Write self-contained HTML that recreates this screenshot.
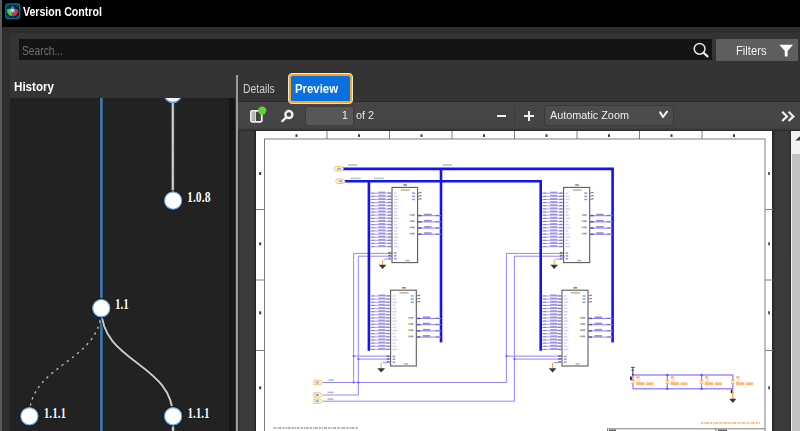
<!DOCTYPE html>
<html><head><meta charset="utf-8"><title>Version Control</title>
<style>
html,body{margin:0;padding:0;}
body{width:800px;height:431px;overflow:hidden;background:#2e2e2e;position:relative;font-family:"Liberation Sans",sans-serif;}
.abs{position:absolute;}
.t{position:absolute;white-space:nowrap;line-height:1;transform-origin:0 0;}
</style></head><body>
<!-- title bar -->
<div class="abs" style="left:0;top:0;width:800px;height:27px;background:#000;"></div>
<div class="abs" style="left:0;top:0;width:1.8px;height:431px;background:#5a5a5a;z-index:5;"></div>
<!-- app icon -->
<svg class="abs" style="left:0px;top:0px" width="26" height="24" viewBox="0 0 26 24">
<rect x="5.8" y="4" width="13.9" height="14.4" rx="2.6" fill="#03222f" stroke="#0b6b93" stroke-width="1.5"/>
<path d="M7.4,6.6 L9,5 M16.5,5 L18.2,6.6 M7.4,15.8 L9,17.4 M16.5,17.4 L18.2,15.8" stroke="#0a5676" stroke-width="1.1" fill="none"/>
<path d="M10,8.3 L12.6,5.6 L15.2,8.3 L12.6,9.6 Z" fill="#1580b8"/>
<path d="M7.2,8.9 L10.4,8.6 L12.4,12 L12.4,16.6 L9.2,15.2 L7.2,12.6 Z" fill="#3fd43a"/>
<path d="M12.7,16.6 L12.7,12 L14.8,8.8 L17.9,9.2 L17.9,12.6 L15.8,15.4 Z" fill="#e8283c"/>
<circle cx="12.5" cy="10.9" r="2.3" fill="#b9bcc8"/>
<circle cx="12.3" cy="10.4" r="1.1" fill="#e6e6ee"/>
<path d="M11,12.4 L14,12.4" stroke="#5a6a9a" stroke-width="0.9"/>
</svg>
<span class="t" id="t_title" style="left:22.7px;top:5.5px;font-size:12.5px;font-weight:bold;color:#fff;transform:scaleX(0.847);">Version Control</span>
<!-- inner panel -->
<div class="abs" style="left:9.5px;top:33px;width:790.5px;height:398px;background:#343434;"></div>
<!-- search -->
<div class="abs" style="left:19px;top:39.3px;width:692.8px;height:21.2px;background:#141414;"></div>
<span class="t" id="t_search" style="left:22px;top:45.2px;font-size:12.5px;color:#707070;transform:scaleX(0.82);">Search...</span>
<svg class="abs" style="left:690px;top:40px" width="22" height="20" viewBox="0 0 22 20">
<circle cx="9.6" cy="8.8" r="5.4" fill="none" stroke="#e8e8e8" stroke-width="1.5"/>
<path d="M13.6,12.9 L17.6,16.4" stroke="#e8e8e8" stroke-width="2.2" stroke-linecap="round"/>
</svg>
<div class="abs" style="left:716px;top:39px;width:82px;height:22px;background:#5e5e5e;"></div>
<span class="t" id="t_filters" style="left:735.5px;top:44.8px;font-size:12px;color:#f2f2f2;transform:scaleX(0.933);">Filters</span>
<svg class="abs" style="left:778px;top:42.5px" width="17" height="16" viewBox="0 0 17 16">
<path d="M1.4,1.8 L15,1.8 L9.6,8 L9.6,13.6 L6.8,13.6 L6.8,8 Z" fill="#fff"/>
</svg>
<!-- history -->
<span class="t" id="t_history" style="left:14px;top:81px;font-size:12.5px;font-weight:bold;color:#fff;transform:scaleX(0.929);">History</span>
<div class="abs" style="left:10px;top:98px;width:219px;height:333px;background:#222;"></div>
<div class="abs" style="left:229px;top:98px;width:6px;height:333px;background:#161616;"></div>
<div class="abs" style="left:236px;top:75px;width:2px;height:356px;background:#9a9a9a;"></div>
<svg class="abs" style="left:10px;top:98px" width="219" height="333" viewBox="10 98 219 333">
<line x1="101.4" y1="98" x2="101.4" y2="431" stroke="#3c7ab5" stroke-width="2.6"/>
<line x1="172.8" y1="98" x2="172.8" y2="201" stroke="#8e8e8e" stroke-width="2.8"/>
<line x1="172.8" y1="98" x2="172.8" y2="201" stroke="#e2e2e2" stroke-width="1.4"/>
<line x1="172.8" y1="98" x2="172.8" y2="201" stroke="#9a9a9a" stroke-width="1.4" stroke-dasharray="0.8 1.4" opacity="0.6"/>
<path d="M101.3,309 C101.3,363 173,363 173,417" fill="none" stroke="#1a1a1a" stroke-width="3.6"/>
<path d="M101.3,309 C101.3,363 173,363 173,417" fill="none" stroke="#c9c9c9" stroke-width="2"/>
<path d="M101.3,309 C101.3,363 29.3,363 29.3,416.4" fill="none" stroke="#bdbdbd" stroke-width="1.35" stroke-dasharray="2.3 4.2" stroke-dashoffset="1.5"/>
<line x1="173" y1="417" x2="173" y2="431" stroke="#8e8e8e" stroke-width="2.8"/>
<line x1="173" y1="417" x2="173" y2="431" stroke="#e2e2e2" stroke-width="1.4"/>
<g fill="#fff" stroke="#5b9ad6" stroke-width="1.3">
<circle cx="172.8" cy="93.8" r="8.7"/>
<circle cx="173.1" cy="200.6" r="8.8"/>
<circle cx="101.3" cy="308.2" r="8.8"/>
<circle cx="29.4" cy="416.3" r="8.8"/>
<circle cx="173.1" cy="416.3" r="8.8"/>
</g>
<g fill="none" stroke="#161616" stroke-width="0.9">
<circle cx="173.1" cy="200.6" r="9.9"/>
<circle cx="101.3" cy="308.2" r="9.9"/>
<circle cx="29.4" cy="416.3" r="9.9"/>
<circle cx="173.1" cy="416.3" r="9.9"/>
</g>
<g font-family="Liberation Serif, serif" font-size="15" fill="#fff" stroke="#141414" stroke-width="1.6" paint-order="stroke" font-weight="bold">
<text x="187.1" y="201.6" textLength="23.4" lengthAdjust="spacingAndGlyphs">1.0.8</text>
<text x="115" y="309.3" textLength="13.8" lengthAdjust="spacingAndGlyphs">1.1</text>
<text x="43.8" y="417.7" textLength="22.3" lengthAdjust="spacingAndGlyphs">1.1.1</text>
<text x="187.4" y="417.7" textLength="22.3" lengthAdjust="spacingAndGlyphs">1.1.1</text>
</g>
</svg>
<!-- tabs -->
<span class="t" id="t_details" style="left:243.4px;top:83px;font-size:12.5px;color:#d2d2d2;transform:scaleX(0.83);">Details</span>
<div class="abs" style="left:287.8px;top:72.6px;width:64.8px;height:31.4px;box-sizing:border-box;border:1px solid #ece8dc;border-radius:4px;background:#f5a623;z-index:3;"></div>
<div class="abs" style="left:290.5px;top:75.7px;width:59.4px;height:25px;border-radius:1.5px;background:#0870df;z-index:3;"></div>
<span class="t" id="t_preview" style="z-index:4;left:294.5px;top:82.8px;font-size:12.5px;font-weight:bold;color:#fff;transform:scaleX(0.911);">Preview</span>
<!-- pdf toolbar -->
<div class="abs" style="left:238px;top:101.2px;width:562px;height:1.2px;background:#2b2b2b;"></div>
<div class="abs" style="left:238px;top:102.2px;width:562px;height:28px;background:#454545;"></div>
<div class="abs" style="left:238px;top:127px;width:562px;height:4px;background:linear-gradient(180deg,rgba(40,40,40,0) 0,rgba(40,40,40,0.35) 60%,#2a2a2a 100%);"></div>
<div class="abs" style="left:238px;top:131px;width:562px;height:300px;background:#3e3e3e;"></div>
<div class="abs" style="left:238px;top:131px;width:18px;height:300px;background:linear-gradient(90deg,#2c2c2c 0,#3b3b3b 2.5px,#3c3c3c 15px,#2c2c2c 18px);"></div>
<!-- sidebar toggle -->
<svg class="abs" style="left:247px;top:105px" width="24" height="22" viewBox="247 105 24 22">
<rect x="250.9" y="110.9" width="10.9" height="10.9" rx="1.2" fill="none" stroke="#f0f0f0" stroke-width="1.8"/>
<rect x="252" y="112" width="2.6" height="8.8" fill="#b8b8b8"/>
<line x1="255.3" y1="111" x2="255.3" y2="122" stroke="#f0f0f0" stroke-width="1.2"/>
<circle cx="262.2" cy="110.6" r="4.2" fill="#5fd13f"/>
</svg>
<svg class="abs" style="left:278px;top:106px" width="20" height="20" viewBox="278 106 20 20">
<circle cx="288.9" cy="114.6" r="3.5" fill="none" stroke="#f0f0f0" stroke-width="2.5"/>
<path d="M286.2,117.4 L282.3,121.1" stroke="#f0f0f0" stroke-width="2.4" stroke-linecap="round"/>
</svg>
<div class="abs" style="left:305.5px;top:106.5px;width:47px;height:18px;background:#575757;border-radius:2.5px;box-shadow:0 0 0 1px #3c3c3c;"></div>
<span class="t" id="t_one" style="left:342.3px;top:110px;font-size:11.5px;color:#f0f0f0;transform:scaleX(0.9);">1</span>
<span class="t" id="t_of2" style="left:356px;top:110px;font-size:11.5px;color:#e6e6e6;transform:scaleX(0.94);">of 2</span>
<div class="abs" style="left:496.5px;top:115px;width:9px;height:2px;background:#f0f0f0;"></div>
<div class="abs" style="left:514px;top:108px;width:1px;height:16px;background:#3a3a3a;"></div>
<div class="abs" style="left:523.5px;top:115px;width:10px;height:2px;background:#f0f0f0;"></div>
<div class="abs" style="left:527.5px;top:111px;width:2px;height:10px;background:#f0f0f0;"></div>
<div class="abs" style="left:544.5px;top:105.5px;width:128px;height:19px;background:#4c4c4c;border-radius:2.5px;box-shadow:0 0 0 1px #3a3a3a;"></div>
<span class="t" id="t_zoom" style="left:550px;top:110px;font-size:11.5px;color:#f0f0f0;transform:scaleX(0.943);">Automatic Zoom</span>
<svg class="abs" style="left:655px;top:108px" width="14" height="14" viewBox="0 0 14 14">
<path d="M5.2,4.4 L8,9 L12,3.6" fill="none" stroke="#f0f0f0" stroke-width="2.1" stroke-linejoin="round" stroke-linecap="round"/>
</svg>
<svg class="abs" style="left:780.2px;top:109.6px" width="17" height="13" viewBox="0 0 17 13">
<path d="M2.2,1.8 L7,6.4 L2.2,11 M8.6,1.8 L13.4,6.4 L8.6,11" fill="none" stroke="#f0f0f0" stroke-width="2.2"/>
</svg>
<!-- page -->
<div class="abs" style="left:255px;top:130.5px;width:518.3px;height:301px;background:#262626;"></div>
<div class="abs" style="left:256px;top:131px;width:516.4px;height:300px;background:#fff;"></div>
<svg class="abs" style="left:256px;top:131px;filter:blur(0.5px)" width="517" height="300" viewBox="256 131 517 300">
<rect x="264.5" y="139" width="500.5" height="300" fill="none" stroke="#787878" stroke-width="0.95"/>
<line x1="327.0" y1="131" x2="327.0" y2="139" stroke="#787878" stroke-width="0.95"/>
<line x1="389.5" y1="131" x2="389.5" y2="139" stroke="#787878" stroke-width="0.95"/>
<line x1="452.0" y1="131" x2="452.0" y2="139" stroke="#787878" stroke-width="0.95"/>
<line x1="514.5" y1="131" x2="514.5" y2="139" stroke="#787878" stroke-width="0.95"/>
<line x1="577.0" y1="131" x2="577.0" y2="139" stroke="#787878" stroke-width="0.95"/>
<line x1="639.5" y1="131" x2="639.5" y2="139" stroke="#787878" stroke-width="0.95"/>
<line x1="702.0" y1="131" x2="702.0" y2="139" stroke="#787878" stroke-width="0.95"/>
<line x1="256" y1="209.5" x2="264.5" y2="209.5" stroke="#787878" stroke-width="0.95"/>
<line x1="765" y1="209.5" x2="773" y2="209.5" stroke="#787878" stroke-width="0.95"/>
<line x1="256" y1="280.0" x2="264.5" y2="280.0" stroke="#787878" stroke-width="0.95"/>
<line x1="765" y1="280.0" x2="773" y2="280.0" stroke="#787878" stroke-width="0.95"/>
<line x1="256" y1="350.5" x2="264.5" y2="350.5" stroke="#787878" stroke-width="0.95"/>
<line x1="765" y1="350.5" x2="773" y2="350.5" stroke="#787878" stroke-width="0.95"/>
<rect x="295.5" y="134.3" width="2" height="2.6" fill="#34346a"/>
<rect x="358.0" y="134.3" width="2" height="2.6" fill="#34346a"/>
<rect x="420.5" y="134.3" width="2" height="2.6" fill="#34346a"/>
<rect x="483.0" y="134.3" width="2" height="2.6" fill="#34346a"/>
<rect x="545.5" y="134.3" width="2" height="2.6" fill="#34346a"/>
<rect x="608.0" y="134.3" width="2" height="2.6" fill="#34346a"/>
<rect x="670.5" y="134.3" width="2" height="2.6" fill="#34346a"/>
<rect x="733.0" y="134.3" width="2" height="2.6" fill="#34346a"/>
<rect x="259.2" y="172.0" width="2" height="3" fill="#34346a"/>
<rect x="768" y="172.0" width="2" height="3" fill="#5a5a8a"/>
<rect x="259.2" y="242.3" width="2" height="3" fill="#34346a"/>
<rect x="768" y="242.3" width="2" height="3" fill="#5a5a8a"/>
<rect x="259.2" y="311.3" width="2" height="3" fill="#34346a"/>
<rect x="768" y="311.3" width="2" height="3" fill="#5a5a8a"/>
<rect x="259.2" y="386.3" width="2" height="3" fill="#34346a"/>
<rect x="768" y="386.3" width="2" height="3" fill="#5a5a8a"/>
<path d="M392.4,253.4 L353.6,253.4 L353.6,382.5" fill="none" stroke="#9684ff" stroke-width="1.0"/>
<path d="M392.4,256.2 L358.3,256.2 L358.3,395.0" fill="none" stroke="#9684ff" stroke-width="1.0"/>
<path d="M353.6,356.1 L390.6,356.1" fill="none" stroke="#9684ff" stroke-width="1.0"/>
<path d="M358.3,359.1 L390.6,359.1" fill="none" stroke="#9684ff" stroke-width="1.0"/>
<path d="M323.2,382.5 L506.4,382.5 L506.4,253.4 L564.4,253.4" fill="none" stroke="#9684ff" stroke-width="1.0"/>
<path d="M323.2,395.0 L358.3,395.0" fill="none" stroke="#9684ff" stroke-width="1.0"/>
<path d="M323.2,401.2 L514.4,401.2 L514.4,256.2 L564.4,256.2" fill="none" stroke="#9684ff" stroke-width="1.0"/>
<path d="M506.4,356.1 L562.0,356.1" fill="none" stroke="#9684ff" stroke-width="1.0"/>
<path d="M514.4,359.1 L562.0,359.1" fill="none" stroke="#9684ff" stroke-width="1.0"/>
<circle cx="353.6" cy="356.1" r="1.05" fill="#6a55ff"/>
<circle cx="358.3" cy="359.1" r="1.05" fill="#6a55ff"/>
<circle cx="353.6" cy="382.5" r="1.05" fill="#6a55ff"/>
<circle cx="358.3" cy="382.5" r="1.05" fill="#6a55ff"/>
<circle cx="506.4" cy="356.1" r="1.05" fill="#6a55ff"/>
<circle cx="514.4" cy="359.1" r="1.05" fill="#6a55ff"/>
<path d="M343.0,168.9 L612.6,168.9 L612.6,342.4" fill="none" stroke="#1711f8" stroke-width="2.6" stroke-linejoin="miter"/>
<path d="M441.0,168.9 L441.0,342.4" fill="none" stroke="#1711f8" stroke-width="2.6" stroke-linejoin="miter"/>
<path d="M344.5,181.3 L540.7,181.3 L540.7,350.8" fill="none" stroke="#1711f8" stroke-width="2.6" stroke-linejoin="miter"/>
<path d="M368.9,181.4 L368.9,350.8" fill="none" stroke="#1711f8" stroke-width="2.6" stroke-linejoin="miter"/>
<line x1="370.3" y1="193.20" x2="392.0" y2="193.20" stroke="#b3a6ff" stroke-width="1.1"/>
<rect x="378.4" y="191.60" width="7" height="1.5" fill="#5c58b8" opacity="0.55"/>
<rect x="371.4" y="192.50" width="3" height="1.2" fill="#555" opacity="0.45"/>
<rect x="387.8" y="192.20" width="3.2" height="1.5" fill="#4a3f70" opacity="0.42"/>
<rect x="393.8" y="192.40" width="3.0" height="1.5" fill="#b48ad8" opacity="0.42"/>
<line x1="370.3" y1="196.35" x2="392.0" y2="196.35" stroke="#b3a6ff" stroke-width="1.1"/>
<rect x="378.4" y="194.75" width="7" height="1.5" fill="#5c58b8" opacity="0.55"/>
<rect x="371.4" y="195.65" width="3" height="1.2" fill="#555" opacity="0.45"/>
<rect x="387.8" y="195.35" width="3.2" height="1.5" fill="#4a3f70" opacity="0.42"/>
<rect x="393.8" y="195.55" width="3.8" height="1.5" fill="#b48ad8" opacity="0.42"/>
<line x1="370.3" y1="199.49" x2="392.0" y2="199.49" stroke="#b3a6ff" stroke-width="1.1"/>
<rect x="378.4" y="197.89" width="7" height="1.5" fill="#5c58b8" opacity="0.55"/>
<rect x="371.4" y="198.79" width="3" height="1.2" fill="#555" opacity="0.45"/>
<rect x="387.8" y="198.49" width="3.2" height="1.5" fill="#4a3f70" opacity="0.42"/>
<rect x="393.8" y="198.69" width="4.6" height="1.5" fill="#b48ad8" opacity="0.42"/>
<line x1="370.3" y1="202.64" x2="392.0" y2="202.64" stroke="#b3a6ff" stroke-width="1.1"/>
<rect x="378.4" y="201.04" width="7" height="1.5" fill="#5c58b8" opacity="0.55"/>
<rect x="371.4" y="201.94" width="3" height="1.2" fill="#555" opacity="0.45"/>
<rect x="387.8" y="201.64" width="3.2" height="1.5" fill="#4a3f70" opacity="0.42"/>
<rect x="393.8" y="201.84" width="3.0" height="1.5" fill="#b48ad8" opacity="0.42"/>
<line x1="370.3" y1="205.78" x2="392.0" y2="205.78" stroke="#b3a6ff" stroke-width="1.1"/>
<rect x="378.4" y="204.18" width="7" height="1.5" fill="#5c58b8" opacity="0.55"/>
<rect x="371.4" y="205.08" width="3" height="1.2" fill="#555" opacity="0.45"/>
<rect x="387.8" y="204.78" width="3.2" height="1.5" fill="#4a3f70" opacity="0.42"/>
<rect x="393.8" y="204.98" width="3.8" height="1.5" fill="#b48ad8" opacity="0.42"/>
<line x1="370.3" y1="208.93" x2="392.0" y2="208.93" stroke="#b3a6ff" stroke-width="1.1"/>
<rect x="378.4" y="207.33" width="7" height="1.5" fill="#5c58b8" opacity="0.55"/>
<rect x="371.4" y="208.23" width="3" height="1.2" fill="#555" opacity="0.45"/>
<rect x="387.8" y="207.93" width="3.2" height="1.5" fill="#4a3f70" opacity="0.42"/>
<rect x="393.8" y="208.12" width="4.6" height="1.5" fill="#b48ad8" opacity="0.42"/>
<line x1="370.3" y1="212.07" x2="392.0" y2="212.07" stroke="#b3a6ff" stroke-width="1.1"/>
<rect x="378.4" y="210.47" width="7" height="1.5" fill="#5c58b8" opacity="0.55"/>
<rect x="371.4" y="211.37" width="3" height="1.2" fill="#555" opacity="0.45"/>
<rect x="387.8" y="211.07" width="3.2" height="1.5" fill="#4a3f70" opacity="0.42"/>
<rect x="393.8" y="211.27" width="3.0" height="1.5" fill="#b48ad8" opacity="0.42"/>
<line x1="370.3" y1="215.22" x2="392.0" y2="215.22" stroke="#b3a6ff" stroke-width="1.1"/>
<rect x="378.4" y="213.62" width="7" height="1.5" fill="#5c58b8" opacity="0.55"/>
<rect x="371.4" y="214.52" width="3" height="1.2" fill="#555" opacity="0.45"/>
<rect x="387.8" y="214.22" width="3.2" height="1.5" fill="#4a3f70" opacity="0.42"/>
<rect x="393.8" y="214.42" width="3.8" height="1.5" fill="#b48ad8" opacity="0.42"/>
<line x1="370.3" y1="218.36" x2="392.0" y2="218.36" stroke="#b3a6ff" stroke-width="1.1"/>
<rect x="378.4" y="216.76" width="7" height="1.5" fill="#5c58b8" opacity="0.55"/>
<rect x="371.4" y="217.66" width="3" height="1.2" fill="#555" opacity="0.45"/>
<rect x="387.8" y="217.36" width="3.2" height="1.5" fill="#4a3f70" opacity="0.42"/>
<rect x="393.8" y="217.56" width="4.6" height="1.5" fill="#b48ad8" opacity="0.42"/>
<line x1="370.3" y1="221.51" x2="392.0" y2="221.51" stroke="#b3a6ff" stroke-width="1.1"/>
<rect x="378.4" y="219.91" width="7" height="1.5" fill="#5c58b8" opacity="0.55"/>
<rect x="371.4" y="220.81" width="3" height="1.2" fill="#555" opacity="0.45"/>
<rect x="387.8" y="220.51" width="3.2" height="1.5" fill="#4a3f70" opacity="0.42"/>
<rect x="393.8" y="220.71" width="3.0" height="1.5" fill="#b48ad8" opacity="0.42"/>
<line x1="370.3" y1="224.65" x2="392.0" y2="224.65" stroke="#b3a6ff" stroke-width="1.1"/>
<rect x="378.4" y="223.05" width="7" height="1.5" fill="#5c58b8" opacity="0.55"/>
<rect x="371.4" y="223.95" width="3" height="1.2" fill="#555" opacity="0.45"/>
<rect x="387.8" y="223.65" width="3.2" height="1.5" fill="#4a3f70" opacity="0.42"/>
<rect x="393.8" y="223.85" width="3.8" height="1.5" fill="#b48ad8" opacity="0.42"/>
<line x1="370.3" y1="227.80" x2="392.0" y2="227.80" stroke="#b3a6ff" stroke-width="1.1"/>
<rect x="378.4" y="226.20" width="7" height="1.5" fill="#5c58b8" opacity="0.55"/>
<rect x="371.4" y="227.10" width="3" height="1.2" fill="#555" opacity="0.45"/>
<rect x="387.8" y="226.80" width="3.2" height="1.5" fill="#4a3f70" opacity="0.42"/>
<rect x="393.8" y="227.00" width="4.6" height="1.5" fill="#b48ad8" opacity="0.42"/>
<line x1="370.3" y1="230.94" x2="392.0" y2="230.94" stroke="#b3a6ff" stroke-width="1.1"/>
<rect x="378.4" y="229.34" width="7" height="1.5" fill="#5c58b8" opacity="0.55"/>
<rect x="371.4" y="230.24" width="3" height="1.2" fill="#555" opacity="0.45"/>
<rect x="387.8" y="229.94" width="3.2" height="1.5" fill="#4a3f70" opacity="0.42"/>
<rect x="393.8" y="230.14" width="3.0" height="1.5" fill="#b48ad8" opacity="0.42"/>
<line x1="370.3" y1="234.09" x2="392.0" y2="234.09" stroke="#b3a6ff" stroke-width="1.1"/>
<rect x="378.4" y="232.49" width="7" height="1.5" fill="#5c58b8" opacity="0.55"/>
<rect x="371.4" y="233.39" width="3" height="1.2" fill="#555" opacity="0.45"/>
<rect x="387.8" y="233.09" width="3.2" height="1.5" fill="#4a3f70" opacity="0.42"/>
<rect x="393.8" y="233.28" width="3.8" height="1.5" fill="#b48ad8" opacity="0.42"/>
<line x1="370.3" y1="237.23" x2="392.0" y2="237.23" stroke="#b3a6ff" stroke-width="1.1"/>
<rect x="378.4" y="235.63" width="7" height="1.5" fill="#5c58b8" opacity="0.55"/>
<rect x="371.4" y="236.53" width="3" height="1.2" fill="#555" opacity="0.45"/>
<rect x="387.8" y="236.23" width="3.2" height="1.5" fill="#4a3f70" opacity="0.42"/>
<rect x="393.8" y="236.43" width="4.6" height="1.5" fill="#b48ad8" opacity="0.42"/>
<line x1="370.3" y1="240.38" x2="392.0" y2="240.38" stroke="#b3a6ff" stroke-width="1.1"/>
<rect x="378.4" y="238.78" width="7" height="1.5" fill="#5c58b8" opacity="0.55"/>
<rect x="371.4" y="239.68" width="3" height="1.2" fill="#555" opacity="0.45"/>
<rect x="387.8" y="239.38" width="3.2" height="1.5" fill="#4a3f70" opacity="0.42"/>
<rect x="393.8" y="239.57" width="3.0" height="1.5" fill="#b48ad8" opacity="0.42"/>
<line x1="370.3" y1="243.52" x2="392.0" y2="243.52" stroke="#b3a6ff" stroke-width="1.1"/>
<rect x="378.4" y="241.92" width="7" height="1.5" fill="#5c58b8" opacity="0.55"/>
<rect x="371.4" y="242.82" width="3" height="1.2" fill="#555" opacity="0.45"/>
<rect x="387.8" y="242.52" width="3.2" height="1.5" fill="#4a3f70" opacity="0.42"/>
<rect x="393.8" y="242.72" width="3.8" height="1.5" fill="#b48ad8" opacity="0.42"/>
<line x1="370.3" y1="246.67" x2="392.0" y2="246.67" stroke="#b3a6ff" stroke-width="1.1"/>
<rect x="378.4" y="245.07" width="7" height="1.5" fill="#5c58b8" opacity="0.55"/>
<rect x="371.4" y="245.97" width="3" height="1.2" fill="#555" opacity="0.45"/>
<rect x="387.8" y="245.67" width="3.2" height="1.5" fill="#4a3f70" opacity="0.42"/>
<rect x="393.8" y="245.87" width="4.6" height="1.5" fill="#b48ad8" opacity="0.42"/>
<rect x="392.0" y="187.4" width="25.6" height="75.2" fill="#fff" fill-opacity="0" stroke="#5a5a5a" stroke-width="1.1"/>
<rect x="403.3" y="184.2" width="3.6" height="1.6" fill="#333" opacity="0.6"/>
<rect x="400.8" y="189.2" width="9" height="1.6" fill="#c9a26a" opacity="0.8"/>
<rect x="405.3" y="259.8" width="4" height="1.5" fill="#9a7fd0" opacity="0.7"/>
<rect x="412.1" y="192.40" width="3" height="1.5" fill="#6a7fd0" opacity="0.75"/>
<line x1="417.6" y1="193.20" x2="421.1" y2="192.40" stroke="#787878" stroke-width="0.95"/>
<rect x="420.2" y="191.90" width="1.4" height="1.4" fill="#c05050" opacity="0.6"/>
<rect x="412.1" y="195.55" width="3" height="1.5" fill="#6a7fd0" opacity="0.75"/>
<line x1="417.6" y1="196.35" x2="421.1" y2="195.55" stroke="#787878" stroke-width="0.95"/>
<rect x="420.2" y="195.05" width="1.4" height="1.4" fill="#c05050" opacity="0.6"/>
<rect x="412.1" y="198.69" width="3" height="1.5" fill="#6a7fd0" opacity="0.75"/>
<line x1="417.6" y1="199.49" x2="421.1" y2="198.69" stroke="#787878" stroke-width="0.95"/>
<rect x="420.2" y="198.19" width="1.4" height="1.4" fill="#c05050" opacity="0.6"/>
<rect x="409.6" y="214.20" width="2.5" height="1.6" fill="#e09a40" opacity="0.85"/>
<rect x="412.1" y="214.20" width="2.5" height="1.6" fill="#5a7ad0" opacity="0.8"/>
<line x1="417.6" y1="215.70" x2="441.0" y2="215.70" stroke="#8f7cff" stroke-width="1"/>
<rect x="418.1" y="214.80" width="3.5" height="1.6" fill="#444" opacity="0.7"/>
<rect x="424.1" y="213.70" width="7.5" height="1.6" fill="#7a60c8" opacity="0.75"/>
<rect x="435.5" y="214.70" width="3.5" height="1.5" fill="#555" opacity="0.45"/>
<rect x="409.6" y="220.40" width="2.5" height="1.6" fill="#e09a40" opacity="0.85"/>
<rect x="412.1" y="220.40" width="2.5" height="1.6" fill="#5a7ad0" opacity="0.8"/>
<line x1="417.6" y1="221.90" x2="441.0" y2="221.90" stroke="#8f7cff" stroke-width="1"/>
<rect x="418.1" y="221.00" width="3.5" height="1.6" fill="#444" opacity="0.7"/>
<rect x="424.1" y="219.90" width="7.5" height="1.6" fill="#7a60c8" opacity="0.75"/>
<rect x="435.5" y="220.90" width="3.5" height="1.5" fill="#555" opacity="0.45"/>
<rect x="409.6" y="226.60" width="2.5" height="1.6" fill="#e09a40" opacity="0.85"/>
<rect x="412.1" y="226.60" width="2.5" height="1.6" fill="#5a7ad0" opacity="0.8"/>
<line x1="417.6" y1="228.10" x2="441.0" y2="228.10" stroke="#8f7cff" stroke-width="1"/>
<rect x="418.1" y="227.20" width="3.5" height="1.6" fill="#444" opacity="0.7"/>
<rect x="424.1" y="226.10" width="7.5" height="1.6" fill="#7a60c8" opacity="0.75"/>
<rect x="435.5" y="227.10" width="3.5" height="1.5" fill="#555" opacity="0.45"/>
<rect x="409.6" y="232.80" width="2.5" height="1.6" fill="#e09a40" opacity="0.85"/>
<rect x="412.1" y="232.80" width="2.5" height="1.6" fill="#5a7ad0" opacity="0.8"/>
<line x1="417.6" y1="234.30" x2="441.0" y2="234.30" stroke="#8f7cff" stroke-width="1"/>
<rect x="418.1" y="233.40" width="3.5" height="1.6" fill="#444" opacity="0.7"/>
<rect x="424.1" y="232.30" width="7.5" height="1.6" fill="#7a60c8" opacity="0.75"/>
<rect x="435.5" y="233.30" width="3.5" height="1.5" fill="#555" opacity="0.45"/>
<rect x="388.2" y="251.90" width="2.8" height="1.6" fill="#555" opacity="0.75"/>
<rect x="394.0" y="252.30" width="2.6" height="1.5" fill="#7a55c0" opacity="0.7"/>
<rect x="388.2" y="254.70" width="2.8" height="1.6" fill="#555" opacity="0.75"/>
<rect x="394.0" y="255.10" width="2.6" height="1.5" fill="#7a55c0" opacity="0.7"/>
<rect x="388.2" y="257.60" width="2.8" height="1.6" fill="#555" opacity="0.75"/>
<rect x="394.0" y="258.00" width="2.6" height="1.5" fill="#7a55c0" opacity="0.7"/>
<path d="M392.0,259.2 L384.1,259.2" stroke="#9d8cff" stroke-width="1" fill="none"/>
<path d="M382.6,259.2 L382.6,265.2" stroke="#f0b040" stroke-width="1.1" fill="none"/>
<path d="M378.7,264.8 L386.5,264.8 L382.6,269.0 Z" fill="#3a3a3a"/>
<line x1="542.1" y1="193.20" x2="563.6" y2="193.20" stroke="#b3a6ff" stroke-width="1.1"/>
<rect x="550.2" y="191.60" width="7" height="1.5" fill="#5c58b8" opacity="0.55"/>
<rect x="543.2" y="192.50" width="3" height="1.2" fill="#555" opacity="0.45"/>
<rect x="559.4" y="192.20" width="3.2" height="1.5" fill="#4a3f70" opacity="0.42"/>
<rect x="565.4" y="192.40" width="3.0" height="1.5" fill="#b48ad8" opacity="0.42"/>
<line x1="542.1" y1="196.35" x2="563.6" y2="196.35" stroke="#b3a6ff" stroke-width="1.1"/>
<rect x="550.2" y="194.75" width="7" height="1.5" fill="#5c58b8" opacity="0.55"/>
<rect x="543.2" y="195.65" width="3" height="1.2" fill="#555" opacity="0.45"/>
<rect x="559.4" y="195.35" width="3.2" height="1.5" fill="#4a3f70" opacity="0.42"/>
<rect x="565.4" y="195.55" width="3.8" height="1.5" fill="#b48ad8" opacity="0.42"/>
<line x1="542.1" y1="199.49" x2="563.6" y2="199.49" stroke="#b3a6ff" stroke-width="1.1"/>
<rect x="550.2" y="197.89" width="7" height="1.5" fill="#5c58b8" opacity="0.55"/>
<rect x="543.2" y="198.79" width="3" height="1.2" fill="#555" opacity="0.45"/>
<rect x="559.4" y="198.49" width="3.2" height="1.5" fill="#4a3f70" opacity="0.42"/>
<rect x="565.4" y="198.69" width="4.6" height="1.5" fill="#b48ad8" opacity="0.42"/>
<line x1="542.1" y1="202.64" x2="563.6" y2="202.64" stroke="#b3a6ff" stroke-width="1.1"/>
<rect x="550.2" y="201.04" width="7" height="1.5" fill="#5c58b8" opacity="0.55"/>
<rect x="543.2" y="201.94" width="3" height="1.2" fill="#555" opacity="0.45"/>
<rect x="559.4" y="201.64" width="3.2" height="1.5" fill="#4a3f70" opacity="0.42"/>
<rect x="565.4" y="201.84" width="3.0" height="1.5" fill="#b48ad8" opacity="0.42"/>
<line x1="542.1" y1="205.78" x2="563.6" y2="205.78" stroke="#b3a6ff" stroke-width="1.1"/>
<rect x="550.2" y="204.18" width="7" height="1.5" fill="#5c58b8" opacity="0.55"/>
<rect x="543.2" y="205.08" width="3" height="1.2" fill="#555" opacity="0.45"/>
<rect x="559.4" y="204.78" width="3.2" height="1.5" fill="#4a3f70" opacity="0.42"/>
<rect x="565.4" y="204.98" width="3.8" height="1.5" fill="#b48ad8" opacity="0.42"/>
<line x1="542.1" y1="208.93" x2="563.6" y2="208.93" stroke="#b3a6ff" stroke-width="1.1"/>
<rect x="550.2" y="207.33" width="7" height="1.5" fill="#5c58b8" opacity="0.55"/>
<rect x="543.2" y="208.23" width="3" height="1.2" fill="#555" opacity="0.45"/>
<rect x="559.4" y="207.93" width="3.2" height="1.5" fill="#4a3f70" opacity="0.42"/>
<rect x="565.4" y="208.12" width="4.6" height="1.5" fill="#b48ad8" opacity="0.42"/>
<line x1="542.1" y1="212.07" x2="563.6" y2="212.07" stroke="#b3a6ff" stroke-width="1.1"/>
<rect x="550.2" y="210.47" width="7" height="1.5" fill="#5c58b8" opacity="0.55"/>
<rect x="543.2" y="211.37" width="3" height="1.2" fill="#555" opacity="0.45"/>
<rect x="559.4" y="211.07" width="3.2" height="1.5" fill="#4a3f70" opacity="0.42"/>
<rect x="565.4" y="211.27" width="3.0" height="1.5" fill="#b48ad8" opacity="0.42"/>
<line x1="542.1" y1="215.22" x2="563.6" y2="215.22" stroke="#b3a6ff" stroke-width="1.1"/>
<rect x="550.2" y="213.62" width="7" height="1.5" fill="#5c58b8" opacity="0.55"/>
<rect x="543.2" y="214.52" width="3" height="1.2" fill="#555" opacity="0.45"/>
<rect x="559.4" y="214.22" width="3.2" height="1.5" fill="#4a3f70" opacity="0.42"/>
<rect x="565.4" y="214.42" width="3.8" height="1.5" fill="#b48ad8" opacity="0.42"/>
<line x1="542.1" y1="218.36" x2="563.6" y2="218.36" stroke="#b3a6ff" stroke-width="1.1"/>
<rect x="550.2" y="216.76" width="7" height="1.5" fill="#5c58b8" opacity="0.55"/>
<rect x="543.2" y="217.66" width="3" height="1.2" fill="#555" opacity="0.45"/>
<rect x="559.4" y="217.36" width="3.2" height="1.5" fill="#4a3f70" opacity="0.42"/>
<rect x="565.4" y="217.56" width="4.6" height="1.5" fill="#b48ad8" opacity="0.42"/>
<line x1="542.1" y1="221.51" x2="563.6" y2="221.51" stroke="#b3a6ff" stroke-width="1.1"/>
<rect x="550.2" y="219.91" width="7" height="1.5" fill="#5c58b8" opacity="0.55"/>
<rect x="543.2" y="220.81" width="3" height="1.2" fill="#555" opacity="0.45"/>
<rect x="559.4" y="220.51" width="3.2" height="1.5" fill="#4a3f70" opacity="0.42"/>
<rect x="565.4" y="220.71" width="3.0" height="1.5" fill="#b48ad8" opacity="0.42"/>
<line x1="542.1" y1="224.65" x2="563.6" y2="224.65" stroke="#b3a6ff" stroke-width="1.1"/>
<rect x="550.2" y="223.05" width="7" height="1.5" fill="#5c58b8" opacity="0.55"/>
<rect x="543.2" y="223.95" width="3" height="1.2" fill="#555" opacity="0.45"/>
<rect x="559.4" y="223.65" width="3.2" height="1.5" fill="#4a3f70" opacity="0.42"/>
<rect x="565.4" y="223.85" width="3.8" height="1.5" fill="#b48ad8" opacity="0.42"/>
<line x1="542.1" y1="227.80" x2="563.6" y2="227.80" stroke="#b3a6ff" stroke-width="1.1"/>
<rect x="550.2" y="226.20" width="7" height="1.5" fill="#5c58b8" opacity="0.55"/>
<rect x="543.2" y="227.10" width="3" height="1.2" fill="#555" opacity="0.45"/>
<rect x="559.4" y="226.80" width="3.2" height="1.5" fill="#4a3f70" opacity="0.42"/>
<rect x="565.4" y="227.00" width="4.6" height="1.5" fill="#b48ad8" opacity="0.42"/>
<line x1="542.1" y1="230.94" x2="563.6" y2="230.94" stroke="#b3a6ff" stroke-width="1.1"/>
<rect x="550.2" y="229.34" width="7" height="1.5" fill="#5c58b8" opacity="0.55"/>
<rect x="543.2" y="230.24" width="3" height="1.2" fill="#555" opacity="0.45"/>
<rect x="559.4" y="229.94" width="3.2" height="1.5" fill="#4a3f70" opacity="0.42"/>
<rect x="565.4" y="230.14" width="3.0" height="1.5" fill="#b48ad8" opacity="0.42"/>
<line x1="542.1" y1="234.09" x2="563.6" y2="234.09" stroke="#b3a6ff" stroke-width="1.1"/>
<rect x="550.2" y="232.49" width="7" height="1.5" fill="#5c58b8" opacity="0.55"/>
<rect x="543.2" y="233.39" width="3" height="1.2" fill="#555" opacity="0.45"/>
<rect x="559.4" y="233.09" width="3.2" height="1.5" fill="#4a3f70" opacity="0.42"/>
<rect x="565.4" y="233.28" width="3.8" height="1.5" fill="#b48ad8" opacity="0.42"/>
<line x1="542.1" y1="237.23" x2="563.6" y2="237.23" stroke="#b3a6ff" stroke-width="1.1"/>
<rect x="550.2" y="235.63" width="7" height="1.5" fill="#5c58b8" opacity="0.55"/>
<rect x="543.2" y="236.53" width="3" height="1.2" fill="#555" opacity="0.45"/>
<rect x="559.4" y="236.23" width="3.2" height="1.5" fill="#4a3f70" opacity="0.42"/>
<rect x="565.4" y="236.43" width="4.6" height="1.5" fill="#b48ad8" opacity="0.42"/>
<line x1="542.1" y1="240.38" x2="563.6" y2="240.38" stroke="#b3a6ff" stroke-width="1.1"/>
<rect x="550.2" y="238.78" width="7" height="1.5" fill="#5c58b8" opacity="0.55"/>
<rect x="543.2" y="239.68" width="3" height="1.2" fill="#555" opacity="0.45"/>
<rect x="559.4" y="239.38" width="3.2" height="1.5" fill="#4a3f70" opacity="0.42"/>
<rect x="565.4" y="239.57" width="3.0" height="1.5" fill="#b48ad8" opacity="0.42"/>
<line x1="542.1" y1="243.52" x2="563.6" y2="243.52" stroke="#b3a6ff" stroke-width="1.1"/>
<rect x="550.2" y="241.92" width="7" height="1.5" fill="#5c58b8" opacity="0.55"/>
<rect x="543.2" y="242.82" width="3" height="1.2" fill="#555" opacity="0.45"/>
<rect x="559.4" y="242.52" width="3.2" height="1.5" fill="#4a3f70" opacity="0.42"/>
<rect x="565.4" y="242.72" width="3.8" height="1.5" fill="#b48ad8" opacity="0.42"/>
<line x1="542.1" y1="246.67" x2="563.6" y2="246.67" stroke="#b3a6ff" stroke-width="1.1"/>
<rect x="550.2" y="245.07" width="7" height="1.5" fill="#5c58b8" opacity="0.55"/>
<rect x="543.2" y="245.97" width="3" height="1.2" fill="#555" opacity="0.45"/>
<rect x="559.4" y="245.67" width="3.2" height="1.5" fill="#4a3f70" opacity="0.42"/>
<rect x="565.4" y="245.87" width="4.6" height="1.5" fill="#b48ad8" opacity="0.42"/>
<rect x="563.6" y="187.4" width="26.1" height="75.2" fill="#fff" fill-opacity="0" stroke="#5a5a5a" stroke-width="1.1"/>
<rect x="575.2" y="184.2" width="3.6" height="1.6" fill="#333" opacity="0.6"/>
<rect x="572.7" y="189.2" width="9" height="1.6" fill="#c9a26a" opacity="0.8"/>
<rect x="577.2" y="259.8" width="4" height="1.5" fill="#9a7fd0" opacity="0.7"/>
<rect x="584.2" y="192.40" width="3" height="1.5" fill="#6a7fd0" opacity="0.75"/>
<line x1="589.7" y1="193.20" x2="593.2" y2="192.40" stroke="#787878" stroke-width="0.95"/>
<rect x="592.3" y="191.90" width="1.4" height="1.4" fill="#c05050" opacity="0.6"/>
<rect x="584.2" y="195.55" width="3" height="1.5" fill="#6a7fd0" opacity="0.75"/>
<line x1="589.7" y1="196.35" x2="593.2" y2="195.55" stroke="#787878" stroke-width="0.95"/>
<rect x="592.3" y="195.05" width="1.4" height="1.4" fill="#c05050" opacity="0.6"/>
<rect x="584.2" y="198.69" width="3" height="1.5" fill="#6a7fd0" opacity="0.75"/>
<line x1="589.7" y1="199.49" x2="593.2" y2="198.69" stroke="#787878" stroke-width="0.95"/>
<rect x="592.3" y="198.19" width="1.4" height="1.4" fill="#c05050" opacity="0.6"/>
<rect x="581.7" y="214.20" width="2.5" height="1.6" fill="#e09a40" opacity="0.85"/>
<rect x="584.2" y="214.20" width="2.5" height="1.6" fill="#5a7ad0" opacity="0.8"/>
<line x1="589.7" y1="215.70" x2="612.6" y2="215.70" stroke="#8f7cff" stroke-width="1"/>
<rect x="590.2" y="214.80" width="3.5" height="1.6" fill="#444" opacity="0.7"/>
<rect x="596.2" y="213.70" width="7.5" height="1.6" fill="#7a60c8" opacity="0.75"/>
<rect x="607.1" y="214.70" width="3.5" height="1.5" fill="#555" opacity="0.45"/>
<rect x="581.7" y="220.40" width="2.5" height="1.6" fill="#e09a40" opacity="0.85"/>
<rect x="584.2" y="220.40" width="2.5" height="1.6" fill="#5a7ad0" opacity="0.8"/>
<line x1="589.7" y1="221.90" x2="612.6" y2="221.90" stroke="#8f7cff" stroke-width="1"/>
<rect x="590.2" y="221.00" width="3.5" height="1.6" fill="#444" opacity="0.7"/>
<rect x="596.2" y="219.90" width="7.5" height="1.6" fill="#7a60c8" opacity="0.75"/>
<rect x="607.1" y="220.90" width="3.5" height="1.5" fill="#555" opacity="0.45"/>
<rect x="581.7" y="226.60" width="2.5" height="1.6" fill="#e09a40" opacity="0.85"/>
<rect x="584.2" y="226.60" width="2.5" height="1.6" fill="#5a7ad0" opacity="0.8"/>
<line x1="589.7" y1="228.10" x2="612.6" y2="228.10" stroke="#8f7cff" stroke-width="1"/>
<rect x="590.2" y="227.20" width="3.5" height="1.6" fill="#444" opacity="0.7"/>
<rect x="596.2" y="226.10" width="7.5" height="1.6" fill="#7a60c8" opacity="0.75"/>
<rect x="607.1" y="227.10" width="3.5" height="1.5" fill="#555" opacity="0.45"/>
<rect x="581.7" y="232.80" width="2.5" height="1.6" fill="#e09a40" opacity="0.85"/>
<rect x="584.2" y="232.80" width="2.5" height="1.6" fill="#5a7ad0" opacity="0.8"/>
<line x1="589.7" y1="234.30" x2="612.6" y2="234.30" stroke="#8f7cff" stroke-width="1"/>
<rect x="590.2" y="233.40" width="3.5" height="1.6" fill="#444" opacity="0.7"/>
<rect x="596.2" y="232.30" width="7.5" height="1.6" fill="#7a60c8" opacity="0.75"/>
<rect x="607.1" y="233.30" width="3.5" height="1.5" fill="#555" opacity="0.45"/>
<rect x="559.8" y="251.90" width="2.8" height="1.6" fill="#555" opacity="0.75"/>
<rect x="565.6" y="252.30" width="2.6" height="1.5" fill="#7a55c0" opacity="0.7"/>
<rect x="559.8" y="254.70" width="2.8" height="1.6" fill="#555" opacity="0.75"/>
<rect x="565.6" y="255.10" width="2.6" height="1.5" fill="#7a55c0" opacity="0.7"/>
<rect x="559.8" y="257.60" width="2.8" height="1.6" fill="#555" opacity="0.75"/>
<rect x="565.6" y="258.00" width="2.6" height="1.5" fill="#7a55c0" opacity="0.7"/>
<path d="M563.6,259.2 L555.7,259.2" stroke="#9d8cff" stroke-width="1" fill="none"/>
<path d="M554.2,259.2 L554.2,265.2" stroke="#f0b040" stroke-width="1.1" fill="none"/>
<path d="M550.3,264.8 L558.1,264.8 L554.2,269.0 Z" fill="#3a3a3a"/>
<line x1="370.3" y1="296.00" x2="390.6" y2="296.00" stroke="#b3a6ff" stroke-width="1.1"/>
<rect x="378.4" y="294.40" width="7" height="1.5" fill="#5c58b8" opacity="0.55"/>
<rect x="371.4" y="295.30" width="3" height="1.2" fill="#555" opacity="0.45"/>
<rect x="386.4" y="295.00" width="3.2" height="1.5" fill="#4a3f70" opacity="0.42"/>
<rect x="392.4" y="295.20" width="3.0" height="1.5" fill="#b48ad8" opacity="0.42"/>
<line x1="370.3" y1="299.14" x2="390.6" y2="299.14" stroke="#b3a6ff" stroke-width="1.1"/>
<rect x="378.4" y="297.54" width="7" height="1.5" fill="#5c58b8" opacity="0.55"/>
<rect x="371.4" y="298.44" width="3" height="1.2" fill="#555" opacity="0.45"/>
<rect x="386.4" y="298.14" width="3.2" height="1.5" fill="#4a3f70" opacity="0.42"/>
<rect x="392.4" y="298.34" width="3.8" height="1.5" fill="#b48ad8" opacity="0.42"/>
<line x1="370.3" y1="302.29" x2="390.6" y2="302.29" stroke="#b3a6ff" stroke-width="1.1"/>
<rect x="378.4" y="300.69" width="7" height="1.5" fill="#5c58b8" opacity="0.55"/>
<rect x="371.4" y="301.59" width="3" height="1.2" fill="#555" opacity="0.45"/>
<rect x="386.4" y="301.29" width="3.2" height="1.5" fill="#4a3f70" opacity="0.42"/>
<rect x="392.4" y="301.49" width="4.6" height="1.5" fill="#b48ad8" opacity="0.42"/>
<line x1="370.3" y1="305.44" x2="390.6" y2="305.44" stroke="#b3a6ff" stroke-width="1.1"/>
<rect x="378.4" y="303.83" width="7" height="1.5" fill="#5c58b8" opacity="0.55"/>
<rect x="371.4" y="304.74" width="3" height="1.2" fill="#555" opacity="0.45"/>
<rect x="386.4" y="304.44" width="3.2" height="1.5" fill="#4a3f70" opacity="0.42"/>
<rect x="392.4" y="304.63" width="3.0" height="1.5" fill="#b48ad8" opacity="0.42"/>
<line x1="370.3" y1="308.58" x2="390.6" y2="308.58" stroke="#b3a6ff" stroke-width="1.1"/>
<rect x="378.4" y="306.98" width="7" height="1.5" fill="#5c58b8" opacity="0.55"/>
<rect x="371.4" y="307.88" width="3" height="1.2" fill="#555" opacity="0.45"/>
<rect x="386.4" y="307.58" width="3.2" height="1.5" fill="#4a3f70" opacity="0.42"/>
<rect x="392.4" y="307.78" width="3.8" height="1.5" fill="#b48ad8" opacity="0.42"/>
<line x1="370.3" y1="311.73" x2="390.6" y2="311.73" stroke="#b3a6ff" stroke-width="1.1"/>
<rect x="378.4" y="310.12" width="7" height="1.5" fill="#5c58b8" opacity="0.55"/>
<rect x="371.4" y="311.03" width="3" height="1.2" fill="#555" opacity="0.45"/>
<rect x="386.4" y="310.73" width="3.2" height="1.5" fill="#4a3f70" opacity="0.42"/>
<rect x="392.4" y="310.93" width="4.6" height="1.5" fill="#b48ad8" opacity="0.42"/>
<line x1="370.3" y1="314.87" x2="390.6" y2="314.87" stroke="#b3a6ff" stroke-width="1.1"/>
<rect x="378.4" y="313.27" width="7" height="1.5" fill="#5c58b8" opacity="0.55"/>
<rect x="371.4" y="314.17" width="3" height="1.2" fill="#555" opacity="0.45"/>
<rect x="386.4" y="313.87" width="3.2" height="1.5" fill="#4a3f70" opacity="0.42"/>
<rect x="392.4" y="314.07" width="3.0" height="1.5" fill="#b48ad8" opacity="0.42"/>
<line x1="370.3" y1="318.01" x2="390.6" y2="318.01" stroke="#b3a6ff" stroke-width="1.1"/>
<rect x="378.4" y="316.41" width="7" height="1.5" fill="#5c58b8" opacity="0.55"/>
<rect x="371.4" y="317.31" width="3" height="1.2" fill="#555" opacity="0.45"/>
<rect x="386.4" y="317.01" width="3.2" height="1.5" fill="#4a3f70" opacity="0.42"/>
<rect x="392.4" y="317.21" width="3.8" height="1.5" fill="#b48ad8" opacity="0.42"/>
<line x1="370.3" y1="321.16" x2="390.6" y2="321.16" stroke="#b3a6ff" stroke-width="1.1"/>
<rect x="378.4" y="319.56" width="7" height="1.5" fill="#5c58b8" opacity="0.55"/>
<rect x="371.4" y="320.46" width="3" height="1.2" fill="#555" opacity="0.45"/>
<rect x="386.4" y="320.16" width="3.2" height="1.5" fill="#4a3f70" opacity="0.42"/>
<rect x="392.4" y="320.36" width="4.6" height="1.5" fill="#b48ad8" opacity="0.42"/>
<line x1="370.3" y1="324.31" x2="390.6" y2="324.31" stroke="#b3a6ff" stroke-width="1.1"/>
<rect x="378.4" y="322.70" width="7" height="1.5" fill="#5c58b8" opacity="0.55"/>
<rect x="371.4" y="323.61" width="3" height="1.2" fill="#555" opacity="0.45"/>
<rect x="386.4" y="323.31" width="3.2" height="1.5" fill="#4a3f70" opacity="0.42"/>
<rect x="392.4" y="323.50" width="3.0" height="1.5" fill="#b48ad8" opacity="0.42"/>
<line x1="370.3" y1="327.45" x2="390.6" y2="327.45" stroke="#b3a6ff" stroke-width="1.1"/>
<rect x="378.4" y="325.85" width="7" height="1.5" fill="#5c58b8" opacity="0.55"/>
<rect x="371.4" y="326.75" width="3" height="1.2" fill="#555" opacity="0.45"/>
<rect x="386.4" y="326.45" width="3.2" height="1.5" fill="#4a3f70" opacity="0.42"/>
<rect x="392.4" y="326.65" width="3.8" height="1.5" fill="#b48ad8" opacity="0.42"/>
<line x1="370.3" y1="330.60" x2="390.6" y2="330.60" stroke="#b3a6ff" stroke-width="1.1"/>
<rect x="378.4" y="329.00" width="7" height="1.5" fill="#5c58b8" opacity="0.55"/>
<rect x="371.4" y="329.90" width="3" height="1.2" fill="#555" opacity="0.45"/>
<rect x="386.4" y="329.60" width="3.2" height="1.5" fill="#4a3f70" opacity="0.42"/>
<rect x="392.4" y="329.80" width="4.6" height="1.5" fill="#b48ad8" opacity="0.42"/>
<line x1="370.3" y1="333.74" x2="390.6" y2="333.74" stroke="#b3a6ff" stroke-width="1.1"/>
<rect x="378.4" y="332.14" width="7" height="1.5" fill="#5c58b8" opacity="0.55"/>
<rect x="371.4" y="333.04" width="3" height="1.2" fill="#555" opacity="0.45"/>
<rect x="386.4" y="332.74" width="3.2" height="1.5" fill="#4a3f70" opacity="0.42"/>
<rect x="392.4" y="332.94" width="3.0" height="1.5" fill="#b48ad8" opacity="0.42"/>
<line x1="370.3" y1="336.88" x2="390.6" y2="336.88" stroke="#b3a6ff" stroke-width="1.1"/>
<rect x="378.4" y="335.28" width="7" height="1.5" fill="#5c58b8" opacity="0.55"/>
<rect x="371.4" y="336.19" width="3" height="1.2" fill="#555" opacity="0.45"/>
<rect x="386.4" y="335.88" width="3.2" height="1.5" fill="#4a3f70" opacity="0.42"/>
<rect x="392.4" y="336.08" width="3.8" height="1.5" fill="#b48ad8" opacity="0.42"/>
<line x1="370.3" y1="340.03" x2="390.6" y2="340.03" stroke="#b3a6ff" stroke-width="1.1"/>
<rect x="378.4" y="338.43" width="7" height="1.5" fill="#5c58b8" opacity="0.55"/>
<rect x="371.4" y="339.33" width="3" height="1.2" fill="#555" opacity="0.45"/>
<rect x="386.4" y="339.03" width="3.2" height="1.5" fill="#4a3f70" opacity="0.42"/>
<rect x="392.4" y="339.23" width="4.6" height="1.5" fill="#b48ad8" opacity="0.42"/>
<line x1="370.3" y1="343.18" x2="390.6" y2="343.18" stroke="#b3a6ff" stroke-width="1.1"/>
<rect x="378.4" y="341.57" width="7" height="1.5" fill="#5c58b8" opacity="0.55"/>
<rect x="371.4" y="342.48" width="3" height="1.2" fill="#555" opacity="0.45"/>
<rect x="386.4" y="342.18" width="3.2" height="1.5" fill="#4a3f70" opacity="0.42"/>
<rect x="392.4" y="342.38" width="3.0" height="1.5" fill="#b48ad8" opacity="0.42"/>
<line x1="370.3" y1="346.32" x2="390.6" y2="346.32" stroke="#b3a6ff" stroke-width="1.1"/>
<rect x="378.4" y="344.72" width="7" height="1.5" fill="#5c58b8" opacity="0.55"/>
<rect x="371.4" y="345.62" width="3" height="1.2" fill="#555" opacity="0.45"/>
<rect x="386.4" y="345.32" width="3.2" height="1.5" fill="#4a3f70" opacity="0.42"/>
<rect x="392.4" y="345.52" width="3.8" height="1.5" fill="#b48ad8" opacity="0.42"/>
<line x1="370.3" y1="349.47" x2="390.6" y2="349.47" stroke="#b3a6ff" stroke-width="1.1"/>
<rect x="378.4" y="347.87" width="7" height="1.5" fill="#5c58b8" opacity="0.55"/>
<rect x="371.4" y="348.77" width="3" height="1.2" fill="#555" opacity="0.45"/>
<rect x="386.4" y="348.47" width="3.2" height="1.5" fill="#4a3f70" opacity="0.42"/>
<rect x="392.4" y="348.67" width="4.6" height="1.5" fill="#b48ad8" opacity="0.42"/>
<rect x="390.6" y="290.2" width="25.7" height="75.8" fill="#fff" fill-opacity="0" stroke="#5a5a5a" stroke-width="1.1"/>
<rect x="402.0" y="287.0" width="3.6" height="1.6" fill="#333" opacity="0.6"/>
<rect x="399.5" y="292.0" width="9" height="1.6" fill="#c9a26a" opacity="0.8"/>
<rect x="404.0" y="363.2" width="4" height="1.5" fill="#9a7fd0" opacity="0.7"/>
<rect x="410.8" y="295.20" width="3" height="1.5" fill="#6a7fd0" opacity="0.75"/>
<line x1="416.3" y1="296.00" x2="419.8" y2="295.20" stroke="#787878" stroke-width="0.95"/>
<rect x="418.9" y="294.70" width="1.4" height="1.4" fill="#c05050" opacity="0.6"/>
<rect x="410.8" y="298.34" width="3" height="1.5" fill="#6a7fd0" opacity="0.75"/>
<line x1="416.3" y1="299.14" x2="419.8" y2="298.34" stroke="#787878" stroke-width="0.95"/>
<rect x="418.9" y="297.84" width="1.4" height="1.4" fill="#c05050" opacity="0.6"/>
<rect x="410.8" y="301.49" width="3" height="1.5" fill="#6a7fd0" opacity="0.75"/>
<line x1="416.3" y1="302.29" x2="419.8" y2="301.49" stroke="#787878" stroke-width="0.95"/>
<rect x="418.9" y="300.99" width="1.4" height="1.4" fill="#c05050" opacity="0.6"/>
<rect x="408.3" y="317.00" width="2.5" height="1.6" fill="#e09a40" opacity="0.85"/>
<rect x="410.8" y="317.00" width="2.5" height="1.6" fill="#5a7ad0" opacity="0.8"/>
<line x1="416.3" y1="318.50" x2="441.0" y2="318.50" stroke="#8f7cff" stroke-width="1"/>
<rect x="416.8" y="317.60" width="3.5" height="1.6" fill="#444" opacity="0.7"/>
<rect x="422.8" y="316.50" width="7.5" height="1.6" fill="#7a60c8" opacity="0.75"/>
<rect x="435.5" y="317.50" width="3.5" height="1.5" fill="#555" opacity="0.45"/>
<rect x="408.3" y="323.20" width="2.5" height="1.6" fill="#e09a40" opacity="0.85"/>
<rect x="410.8" y="323.20" width="2.5" height="1.6" fill="#5a7ad0" opacity="0.8"/>
<line x1="416.3" y1="324.70" x2="441.0" y2="324.70" stroke="#8f7cff" stroke-width="1"/>
<rect x="416.8" y="323.80" width="3.5" height="1.6" fill="#444" opacity="0.7"/>
<rect x="422.8" y="322.70" width="7.5" height="1.6" fill="#7a60c8" opacity="0.75"/>
<rect x="435.5" y="323.70" width="3.5" height="1.5" fill="#555" opacity="0.45"/>
<rect x="408.3" y="329.40" width="2.5" height="1.6" fill="#e09a40" opacity="0.85"/>
<rect x="410.8" y="329.40" width="2.5" height="1.6" fill="#5a7ad0" opacity="0.8"/>
<line x1="416.3" y1="330.90" x2="441.0" y2="330.90" stroke="#8f7cff" stroke-width="1"/>
<rect x="416.8" y="330.00" width="3.5" height="1.6" fill="#444" opacity="0.7"/>
<rect x="422.8" y="328.90" width="7.5" height="1.6" fill="#7a60c8" opacity="0.75"/>
<rect x="435.5" y="329.90" width="3.5" height="1.5" fill="#555" opacity="0.45"/>
<rect x="408.3" y="335.60" width="2.5" height="1.6" fill="#e09a40" opacity="0.85"/>
<rect x="410.8" y="335.60" width="2.5" height="1.6" fill="#5a7ad0" opacity="0.8"/>
<line x1="416.3" y1="337.10" x2="441.0" y2="337.10" stroke="#8f7cff" stroke-width="1"/>
<rect x="416.8" y="336.20" width="3.5" height="1.6" fill="#444" opacity="0.7"/>
<rect x="422.8" y="335.10" width="7.5" height="1.6" fill="#7a60c8" opacity="0.75"/>
<rect x="435.5" y="336.10" width="3.5" height="1.5" fill="#555" opacity="0.45"/>
<rect x="386.8" y="355.30" width="2.8" height="1.6" fill="#555" opacity="0.75"/>
<rect x="392.6" y="355.70" width="2.6" height="1.5" fill="#7a55c0" opacity="0.7"/>
<rect x="386.8" y="358.10" width="2.8" height="1.6" fill="#555" opacity="0.75"/>
<rect x="392.6" y="358.50" width="2.6" height="1.5" fill="#7a55c0" opacity="0.7"/>
<rect x="386.8" y="361.00" width="2.8" height="1.6" fill="#555" opacity="0.75"/>
<rect x="392.6" y="361.40" width="2.6" height="1.5" fill="#7a55c0" opacity="0.7"/>
<path d="M390.6,362.6 L382.7,362.6" stroke="#9d8cff" stroke-width="1" fill="none"/>
<path d="M381.2,362.6 L381.2,368.6" stroke="#f0b040" stroke-width="1.1" fill="none"/>
<path d="M377.3,368.2 L385.1,368.2 L381.2,372.4 Z" fill="#3a3a3a"/>
<line x1="542.1" y1="296.00" x2="562.0" y2="296.00" stroke="#b3a6ff" stroke-width="1.1"/>
<rect x="550.2" y="294.40" width="7" height="1.5" fill="#5c58b8" opacity="0.55"/>
<rect x="543.2" y="295.30" width="3" height="1.2" fill="#555" opacity="0.45"/>
<rect x="557.8" y="295.00" width="3.2" height="1.5" fill="#4a3f70" opacity="0.42"/>
<rect x="563.8" y="295.20" width="3.0" height="1.5" fill="#b48ad8" opacity="0.42"/>
<line x1="542.1" y1="299.14" x2="562.0" y2="299.14" stroke="#b3a6ff" stroke-width="1.1"/>
<rect x="550.2" y="297.54" width="7" height="1.5" fill="#5c58b8" opacity="0.55"/>
<rect x="543.2" y="298.44" width="3" height="1.2" fill="#555" opacity="0.45"/>
<rect x="557.8" y="298.14" width="3.2" height="1.5" fill="#4a3f70" opacity="0.42"/>
<rect x="563.8" y="298.34" width="3.8" height="1.5" fill="#b48ad8" opacity="0.42"/>
<line x1="542.1" y1="302.29" x2="562.0" y2="302.29" stroke="#b3a6ff" stroke-width="1.1"/>
<rect x="550.2" y="300.69" width="7" height="1.5" fill="#5c58b8" opacity="0.55"/>
<rect x="543.2" y="301.59" width="3" height="1.2" fill="#555" opacity="0.45"/>
<rect x="557.8" y="301.29" width="3.2" height="1.5" fill="#4a3f70" opacity="0.42"/>
<rect x="563.8" y="301.49" width="4.6" height="1.5" fill="#b48ad8" opacity="0.42"/>
<line x1="542.1" y1="305.44" x2="562.0" y2="305.44" stroke="#b3a6ff" stroke-width="1.1"/>
<rect x="550.2" y="303.83" width="7" height="1.5" fill="#5c58b8" opacity="0.55"/>
<rect x="543.2" y="304.74" width="3" height="1.2" fill="#555" opacity="0.45"/>
<rect x="557.8" y="304.44" width="3.2" height="1.5" fill="#4a3f70" opacity="0.42"/>
<rect x="563.8" y="304.63" width="3.0" height="1.5" fill="#b48ad8" opacity="0.42"/>
<line x1="542.1" y1="308.58" x2="562.0" y2="308.58" stroke="#b3a6ff" stroke-width="1.1"/>
<rect x="550.2" y="306.98" width="7" height="1.5" fill="#5c58b8" opacity="0.55"/>
<rect x="543.2" y="307.88" width="3" height="1.2" fill="#555" opacity="0.45"/>
<rect x="557.8" y="307.58" width="3.2" height="1.5" fill="#4a3f70" opacity="0.42"/>
<rect x="563.8" y="307.78" width="3.8" height="1.5" fill="#b48ad8" opacity="0.42"/>
<line x1="542.1" y1="311.73" x2="562.0" y2="311.73" stroke="#b3a6ff" stroke-width="1.1"/>
<rect x="550.2" y="310.12" width="7" height="1.5" fill="#5c58b8" opacity="0.55"/>
<rect x="543.2" y="311.03" width="3" height="1.2" fill="#555" opacity="0.45"/>
<rect x="557.8" y="310.73" width="3.2" height="1.5" fill="#4a3f70" opacity="0.42"/>
<rect x="563.8" y="310.93" width="4.6" height="1.5" fill="#b48ad8" opacity="0.42"/>
<line x1="542.1" y1="314.87" x2="562.0" y2="314.87" stroke="#b3a6ff" stroke-width="1.1"/>
<rect x="550.2" y="313.27" width="7" height="1.5" fill="#5c58b8" opacity="0.55"/>
<rect x="543.2" y="314.17" width="3" height="1.2" fill="#555" opacity="0.45"/>
<rect x="557.8" y="313.87" width="3.2" height="1.5" fill="#4a3f70" opacity="0.42"/>
<rect x="563.8" y="314.07" width="3.0" height="1.5" fill="#b48ad8" opacity="0.42"/>
<line x1="542.1" y1="318.01" x2="562.0" y2="318.01" stroke="#b3a6ff" stroke-width="1.1"/>
<rect x="550.2" y="316.41" width="7" height="1.5" fill="#5c58b8" opacity="0.55"/>
<rect x="543.2" y="317.31" width="3" height="1.2" fill="#555" opacity="0.45"/>
<rect x="557.8" y="317.01" width="3.2" height="1.5" fill="#4a3f70" opacity="0.42"/>
<rect x="563.8" y="317.21" width="3.8" height="1.5" fill="#b48ad8" opacity="0.42"/>
<line x1="542.1" y1="321.16" x2="562.0" y2="321.16" stroke="#b3a6ff" stroke-width="1.1"/>
<rect x="550.2" y="319.56" width="7" height="1.5" fill="#5c58b8" opacity="0.55"/>
<rect x="543.2" y="320.46" width="3" height="1.2" fill="#555" opacity="0.45"/>
<rect x="557.8" y="320.16" width="3.2" height="1.5" fill="#4a3f70" opacity="0.42"/>
<rect x="563.8" y="320.36" width="4.6" height="1.5" fill="#b48ad8" opacity="0.42"/>
<line x1="542.1" y1="324.31" x2="562.0" y2="324.31" stroke="#b3a6ff" stroke-width="1.1"/>
<rect x="550.2" y="322.70" width="7" height="1.5" fill="#5c58b8" opacity="0.55"/>
<rect x="543.2" y="323.61" width="3" height="1.2" fill="#555" opacity="0.45"/>
<rect x="557.8" y="323.31" width="3.2" height="1.5" fill="#4a3f70" opacity="0.42"/>
<rect x="563.8" y="323.50" width="3.0" height="1.5" fill="#b48ad8" opacity="0.42"/>
<line x1="542.1" y1="327.45" x2="562.0" y2="327.45" stroke="#b3a6ff" stroke-width="1.1"/>
<rect x="550.2" y="325.85" width="7" height="1.5" fill="#5c58b8" opacity="0.55"/>
<rect x="543.2" y="326.75" width="3" height="1.2" fill="#555" opacity="0.45"/>
<rect x="557.8" y="326.45" width="3.2" height="1.5" fill="#4a3f70" opacity="0.42"/>
<rect x="563.8" y="326.65" width="3.8" height="1.5" fill="#b48ad8" opacity="0.42"/>
<line x1="542.1" y1="330.60" x2="562.0" y2="330.60" stroke="#b3a6ff" stroke-width="1.1"/>
<rect x="550.2" y="329.00" width="7" height="1.5" fill="#5c58b8" opacity="0.55"/>
<rect x="543.2" y="329.90" width="3" height="1.2" fill="#555" opacity="0.45"/>
<rect x="557.8" y="329.60" width="3.2" height="1.5" fill="#4a3f70" opacity="0.42"/>
<rect x="563.8" y="329.80" width="4.6" height="1.5" fill="#b48ad8" opacity="0.42"/>
<line x1="542.1" y1="333.74" x2="562.0" y2="333.74" stroke="#b3a6ff" stroke-width="1.1"/>
<rect x="550.2" y="332.14" width="7" height="1.5" fill="#5c58b8" opacity="0.55"/>
<rect x="543.2" y="333.04" width="3" height="1.2" fill="#555" opacity="0.45"/>
<rect x="557.8" y="332.74" width="3.2" height="1.5" fill="#4a3f70" opacity="0.42"/>
<rect x="563.8" y="332.94" width="3.0" height="1.5" fill="#b48ad8" opacity="0.42"/>
<line x1="542.1" y1="336.88" x2="562.0" y2="336.88" stroke="#b3a6ff" stroke-width="1.1"/>
<rect x="550.2" y="335.28" width="7" height="1.5" fill="#5c58b8" opacity="0.55"/>
<rect x="543.2" y="336.19" width="3" height="1.2" fill="#555" opacity="0.45"/>
<rect x="557.8" y="335.88" width="3.2" height="1.5" fill="#4a3f70" opacity="0.42"/>
<rect x="563.8" y="336.08" width="3.8" height="1.5" fill="#b48ad8" opacity="0.42"/>
<line x1="542.1" y1="340.03" x2="562.0" y2="340.03" stroke="#b3a6ff" stroke-width="1.1"/>
<rect x="550.2" y="338.43" width="7" height="1.5" fill="#5c58b8" opacity="0.55"/>
<rect x="543.2" y="339.33" width="3" height="1.2" fill="#555" opacity="0.45"/>
<rect x="557.8" y="339.03" width="3.2" height="1.5" fill="#4a3f70" opacity="0.42"/>
<rect x="563.8" y="339.23" width="4.6" height="1.5" fill="#b48ad8" opacity="0.42"/>
<line x1="542.1" y1="343.18" x2="562.0" y2="343.18" stroke="#b3a6ff" stroke-width="1.1"/>
<rect x="550.2" y="341.57" width="7" height="1.5" fill="#5c58b8" opacity="0.55"/>
<rect x="543.2" y="342.48" width="3" height="1.2" fill="#555" opacity="0.45"/>
<rect x="557.8" y="342.18" width="3.2" height="1.5" fill="#4a3f70" opacity="0.42"/>
<rect x="563.8" y="342.38" width="3.0" height="1.5" fill="#b48ad8" opacity="0.42"/>
<line x1="542.1" y1="346.32" x2="562.0" y2="346.32" stroke="#b3a6ff" stroke-width="1.1"/>
<rect x="550.2" y="344.72" width="7" height="1.5" fill="#5c58b8" opacity="0.55"/>
<rect x="543.2" y="345.62" width="3" height="1.2" fill="#555" opacity="0.45"/>
<rect x="557.8" y="345.32" width="3.2" height="1.5" fill="#4a3f70" opacity="0.42"/>
<rect x="563.8" y="345.52" width="3.8" height="1.5" fill="#b48ad8" opacity="0.42"/>
<line x1="542.1" y1="349.47" x2="562.0" y2="349.47" stroke="#b3a6ff" stroke-width="1.1"/>
<rect x="550.2" y="347.87" width="7" height="1.5" fill="#5c58b8" opacity="0.55"/>
<rect x="543.2" y="348.77" width="3" height="1.2" fill="#555" opacity="0.45"/>
<rect x="557.8" y="348.47" width="3.2" height="1.5" fill="#4a3f70" opacity="0.42"/>
<rect x="563.8" y="348.67" width="4.6" height="1.5" fill="#b48ad8" opacity="0.42"/>
<rect x="562.0" y="290.2" width="26.0" height="75.8" fill="#fff" fill-opacity="0" stroke="#5a5a5a" stroke-width="1.1"/>
<rect x="573.5" y="287.0" width="3.6" height="1.6" fill="#333" opacity="0.6"/>
<rect x="571.0" y="292.0" width="9" height="1.6" fill="#c9a26a" opacity="0.8"/>
<rect x="575.5" y="363.2" width="4" height="1.5" fill="#9a7fd0" opacity="0.7"/>
<rect x="582.5" y="295.20" width="3" height="1.5" fill="#6a7fd0" opacity="0.75"/>
<line x1="588.0" y1="296.00" x2="591.5" y2="295.20" stroke="#787878" stroke-width="0.95"/>
<rect x="590.6" y="294.70" width="1.4" height="1.4" fill="#c05050" opacity="0.6"/>
<rect x="582.5" y="298.34" width="3" height="1.5" fill="#6a7fd0" opacity="0.75"/>
<line x1="588.0" y1="299.14" x2="591.5" y2="298.34" stroke="#787878" stroke-width="0.95"/>
<rect x="590.6" y="297.84" width="1.4" height="1.4" fill="#c05050" opacity="0.6"/>
<rect x="582.5" y="301.49" width="3" height="1.5" fill="#6a7fd0" opacity="0.75"/>
<line x1="588.0" y1="302.29" x2="591.5" y2="301.49" stroke="#787878" stroke-width="0.95"/>
<rect x="590.6" y="300.99" width="1.4" height="1.4" fill="#c05050" opacity="0.6"/>
<rect x="580.0" y="317.00" width="2.5" height="1.6" fill="#e09a40" opacity="0.85"/>
<rect x="582.5" y="317.00" width="2.5" height="1.6" fill="#5a7ad0" opacity="0.8"/>
<line x1="588.0" y1="318.50" x2="612.6" y2="318.50" stroke="#8f7cff" stroke-width="1"/>
<rect x="588.5" y="317.60" width="3.5" height="1.6" fill="#444" opacity="0.7"/>
<rect x="594.5" y="316.50" width="7.5" height="1.6" fill="#7a60c8" opacity="0.75"/>
<rect x="607.1" y="317.50" width="3.5" height="1.5" fill="#555" opacity="0.45"/>
<rect x="580.0" y="323.20" width="2.5" height="1.6" fill="#e09a40" opacity="0.85"/>
<rect x="582.5" y="323.20" width="2.5" height="1.6" fill="#5a7ad0" opacity="0.8"/>
<line x1="588.0" y1="324.70" x2="612.6" y2="324.70" stroke="#8f7cff" stroke-width="1"/>
<rect x="588.5" y="323.80" width="3.5" height="1.6" fill="#444" opacity="0.7"/>
<rect x="594.5" y="322.70" width="7.5" height="1.6" fill="#7a60c8" opacity="0.75"/>
<rect x="607.1" y="323.70" width="3.5" height="1.5" fill="#555" opacity="0.45"/>
<rect x="580.0" y="329.40" width="2.5" height="1.6" fill="#e09a40" opacity="0.85"/>
<rect x="582.5" y="329.40" width="2.5" height="1.6" fill="#5a7ad0" opacity="0.8"/>
<line x1="588.0" y1="330.90" x2="612.6" y2="330.90" stroke="#8f7cff" stroke-width="1"/>
<rect x="588.5" y="330.00" width="3.5" height="1.6" fill="#444" opacity="0.7"/>
<rect x="594.5" y="328.90" width="7.5" height="1.6" fill="#7a60c8" opacity="0.75"/>
<rect x="607.1" y="329.90" width="3.5" height="1.5" fill="#555" opacity="0.45"/>
<rect x="580.0" y="335.60" width="2.5" height="1.6" fill="#e09a40" opacity="0.85"/>
<rect x="582.5" y="335.60" width="2.5" height="1.6" fill="#5a7ad0" opacity="0.8"/>
<line x1="588.0" y1="337.10" x2="612.6" y2="337.10" stroke="#8f7cff" stroke-width="1"/>
<rect x="588.5" y="336.20" width="3.5" height="1.6" fill="#444" opacity="0.7"/>
<rect x="594.5" y="335.10" width="7.5" height="1.6" fill="#7a60c8" opacity="0.75"/>
<rect x="607.1" y="336.10" width="3.5" height="1.5" fill="#555" opacity="0.45"/>
<rect x="558.2" y="355.30" width="2.8" height="1.6" fill="#555" opacity="0.75"/>
<rect x="564.0" y="355.70" width="2.6" height="1.5" fill="#7a55c0" opacity="0.7"/>
<rect x="558.2" y="358.10" width="2.8" height="1.6" fill="#555" opacity="0.75"/>
<rect x="564.0" y="358.50" width="2.6" height="1.5" fill="#7a55c0" opacity="0.7"/>
<rect x="558.2" y="361.00" width="2.8" height="1.6" fill="#555" opacity="0.75"/>
<rect x="564.0" y="361.40" width="2.6" height="1.5" fill="#7a55c0" opacity="0.7"/>
<path d="M562.0,362.6 L554.1,362.6" stroke="#9d8cff" stroke-width="1" fill="none"/>
<path d="M552.6,362.6 L552.6,368.6" stroke="#f0b040" stroke-width="1.1" fill="none"/>
<path d="M548.7,368.2 L556.5,368.2 L552.6,372.4 Z" fill="#3a3a3a"/>
<path d="M335.4,166.6 L341.8,166.6 L343.6,168.8 L341.8,171.0 L335.4,171.0 L334.0,168.8 Z" fill="#fff8d8" stroke="#e8bc55" stroke-width="0.8"/>
<rect x="337.2" y="167.8" width="3.6" height="2" fill="#7a66d8" opacity="0.6"/>
<path d="M336.9,179.1 L343.3,179.1 L345.1,181.3 L343.3,183.5 L336.9,183.5 L335.5,181.3 Z" fill="#fff8d8" stroke="#e8bc55" stroke-width="0.8"/>
<rect x="338.7" y="180.3" width="3.6" height="2" fill="#7a66d8" opacity="0.6"/>
<path d="M313.8,380.3 L320.0,380.3 L323.0,382.5 L320.0,384.7 L313.8,384.7 Z" fill="#fff8d8" stroke="#e8bc55" stroke-width="0.8"/>
<rect x="315.6" y="381.5" width="3.4" height="2" fill="#7a66d8" opacity="0.6"/>
<path d="M313.8,392.8 L320.0,392.8 L323.0,395.0 L320.0,397.2 L313.8,397.2 Z" fill="#fff8d8" stroke="#e8bc55" stroke-width="0.8"/>
<rect x="315.6" y="394.0" width="3.4" height="2" fill="#7a66d8" opacity="0.6"/>
<path d="M313.8,399.0 L320.0,399.0 L323.0,401.2 L320.0,403.4 L313.8,403.4 Z" fill="#fff8d8" stroke="#e8bc55" stroke-width="0.8"/>
<rect x="315.6" y="400.2" width="3.4" height="2" fill="#7a66d8" opacity="0.6"/>
<rect x="348.0" y="164.3" width="9.0" height="1.6" fill="#5b6f9a" opacity="0.45"/>
<rect x="350.5" y="177.6" width="10.0" height="1.6" fill="#6f9a5b" opacity="0.45"/>
<rect x="374.0" y="177.6" width="10.0" height="1.6" fill="#6f9a5b" opacity="0.45"/>
<rect x="443.0" y="164.3" width="9.0" height="1.6" fill="#5b6f9a" opacity="0.45"/>
<rect x="328.5" y="379.2" width="5.0" height="1.6" fill="#4d7060" opacity="0.45"/>
<rect x="327.5" y="391.6" width="6.0" height="1.6" fill="#4d7060" opacity="0.45"/>
<rect x="327.5" y="398.3" width="6.0" height="1.6" fill="#4d7060" opacity="0.45"/>
<path d="M633.0,375.0 L732.8,375.0 L732.8,388.8 L633.0,388.8 L633.0,374.5" fill="none" stroke="#9d8dff" stroke-width="1.4"/>
<path d="M667.3,375.0 L667.3,388.8" fill="none" stroke="#9d8dff" stroke-width="1.4"/>
<path d="M701.6,375.0 L701.6,388.8" fill="none" stroke="#9d8dff" stroke-width="1.4"/>
<rect x="631.2" y="380.2" width="3.6" height="3.2" fill="#fff"/>
<line x1="631.2" y1="380.6" x2="634.8" y2="380.6" stroke="#e0a040" stroke-width="0.9"/>
<line x1="631.2" y1="383" x2="634.8" y2="383" stroke="#e0a040" stroke-width="0.9"/>
<rect x="636.4" y="376.2" width="3.2" height="2.4" fill="#ff9a3a" opacity="0.7"/>
<rect x="636.2" y="382.2" width="8.4" height="2.8" fill="#ff8a2a" opacity="0.62"/>
<rect x="646.2" y="382.4" width="7" height="2.6" fill="#ff8a2a" opacity="0.62"/>
<line x1="636.5" y1="382.3" x2="640.5" y2="379.6" stroke="#ff8a2a" stroke-width="0.7" opacity="0.8"/>
<rect x="665.5" y="380.2" width="3.6" height="3.2" fill="#fff"/>
<line x1="665.5" y1="380.6" x2="669.1" y2="380.6" stroke="#e0a040" stroke-width="0.9"/>
<line x1="665.5" y1="383" x2="669.1" y2="383" stroke="#e0a040" stroke-width="0.9"/>
<rect x="670.7" y="376.2" width="3.2" height="2.4" fill="#ff9a3a" opacity="0.7"/>
<rect x="670.5" y="382.2" width="8.4" height="2.8" fill="#ff8a2a" opacity="0.62"/>
<rect x="680.5" y="382.4" width="7" height="2.6" fill="#ff8a2a" opacity="0.62"/>
<line x1="670.8" y1="382.3" x2="674.8" y2="379.6" stroke="#ff8a2a" stroke-width="0.7" opacity="0.8"/>
<rect x="699.8" y="380.2" width="3.6" height="3.2" fill="#fff"/>
<line x1="699.8" y1="380.6" x2="703.4" y2="380.6" stroke="#e0a040" stroke-width="0.9"/>
<line x1="699.8" y1="383" x2="703.4" y2="383" stroke="#e0a040" stroke-width="0.9"/>
<rect x="705.0" y="376.2" width="3.2" height="2.4" fill="#ff9a3a" opacity="0.7"/>
<rect x="704.8" y="382.2" width="8.4" height="2.8" fill="#ff8a2a" opacity="0.62"/>
<rect x="714.8" y="382.4" width="7" height="2.6" fill="#ff8a2a" opacity="0.62"/>
<line x1="705.1" y1="382.3" x2="709.1" y2="379.6" stroke="#ff8a2a" stroke-width="0.7" opacity="0.8"/>
<rect x="731.0" y="380.2" width="3.6" height="3.2" fill="#fff"/>
<line x1="731.0" y1="380.6" x2="734.6" y2="380.6" stroke="#e0a040" stroke-width="0.9"/>
<line x1="731.0" y1="383" x2="734.6" y2="383" stroke="#e0a040" stroke-width="0.9"/>
<rect x="736.2" y="376.2" width="3.2" height="2.4" fill="#ff9a3a" opacity="0.7"/>
<rect x="736.0" y="382.2" width="8.4" height="2.8" fill="#ff8a2a" opacity="0.62"/>
<rect x="746.0" y="382.4" width="7" height="2.6" fill="#ff8a2a" opacity="0.62"/>
<line x1="736.3" y1="382.3" x2="740.3" y2="379.6" stroke="#ff8a2a" stroke-width="0.7" opacity="0.8"/>
<circle cx="667.3" cy="375.0" r="1.2" fill="#6a55ff"/>
<circle cx="667.3" cy="388.8" r="1.2" fill="#6a55ff"/>
<circle cx="701.6" cy="375.0" r="1.2" fill="#6a55ff"/>
<circle cx="701.6" cy="388.8" r="1.2" fill="#6a55ff"/>
<circle cx="633.0" cy="375.0" r="1.2" fill="#6a55ff"/>
<path d="M631,367.4 L634.6,367.4 M632.8,367.4 L632.8,374.6 M631.4,370.2 L634.2,370.2" stroke="#444" stroke-width="1" fill="none"/>
<rect x="630" y="376.5" width="1.8" height="3.6" fill="#222"/>
<rect x="730.8" y="389.6" width="1.8" height="3.6" fill="#222"/>
<path d="M732.8,389 L732.8,399" stroke="#e8a020" stroke-width="1.1" fill="none"/>
<path d="M729.2,398.8 L736.4,398.8 L732.8,403 Z" fill="#333"/>
<line x1="701" y1="423" x2="760" y2="423" stroke="#ff8a2a" stroke-width="1.7" stroke-dasharray="2.2 0.9 1.2 0.7 3 1.1" opacity="0.75"/>
<line x1="607.5" y1="428.8" x2="765" y2="428.8" stroke="#787878" stroke-width="0.95"/>
<line x1="607.5" y1="428.4" x2="607.5" y2="431" stroke="#787878" stroke-width="0.95"/>
<line x1="716" y1="428.4" x2="716" y2="431" stroke="#787878" stroke-width="0.95"/>
<rect x="609.0" y="429.6" width="7.0" height="1.6" fill="#333" opacity="0.8"/>
<rect x="718.0" y="429.6" width="9.0" height="1.6" fill="#333" opacity="0.8"/>
<line x1="273.5" y1="428" x2="358.5" y2="428" stroke="#555" stroke-width="1.6" stroke-dasharray="2.2 0.9 1.2 0.7 3 1.1" opacity="0.6"/>
</svg>
<!-- scrollbar -->
<div class="abs" style="left:772.6px;top:131px;width:18px;height:300px;background:linear-gradient(90deg,#2b2b2b 0,#3a3a3a 2px,#3b3b3b 15px,#2e2e2e 18px);"></div>
<div class="abs" style="left:790.6px;top:131px;width:10px;height:300px;background:#f1f1f1;"></div>
<div class="abs" style="left:791.6px;top:154px;width:9px;height:277px;background:#c2c2c2;"></div>
<svg class="abs" style="left:790px;top:131px" width="10" height="20" viewBox="790 131 10 20">
<path d="M795.3,140.6 L799.5,136.4 L803.7,140.6 Z" fill="#3c3c3c"/>
</svg>
</body></html>
